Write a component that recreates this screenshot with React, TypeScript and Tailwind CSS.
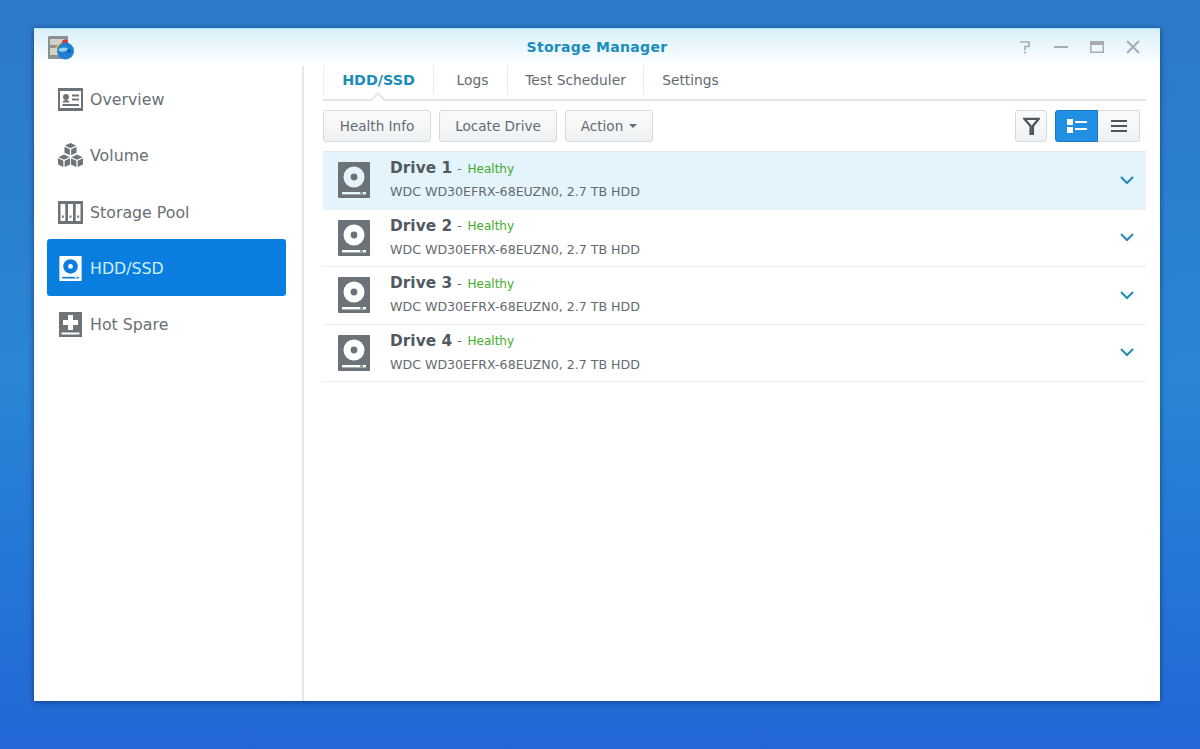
import React from "react";

const F = "font-['DejaVu_Sans',sans-serif]";

function HddIcon({ className, fg = "#6b7378", bg = "#ffffff" }: { className?: string; fg?: string; bg?: string }) {
  return (
    <svg viewBox="0 0 32 36" className={className}>
      <rect x="0" y="0" width="32" height="36" rx="1" fill={fg} />
      <circle cx="16" cy="15" r="10.500" fill={bg} />
      <circle cx="16" cy="15" r="3.400" fill={fg} />
      <rect x="4" y="30" width="24" height="2.400" fill={bg} />
      <rect x="22" y="30.400" width="3" height="1.400" fill={fg} />
    </svg>
  );
}

const items = [
  {
    name: "Overview",
    icon: (
      <svg viewBox="0 0 25 23" className="w-[25px] h-[23px]">
        <path fillRule="evenodd" d="M0 0h25v23H0zM2 3v17h21V3z" fill="#6e7377" />
        <circle cx="8" cy="9" r="3" fill="#6e7377" />
        <path d="M4.500 14.500c0-1.500 1.500-2.500 3.500-2.500s3.500 1 3.500 2.500z" fill="#6e7377" />
        <path d="M14 6.500h7v2h-7zM14 10.500h7v2h-7zM4.500 16h16.500v2H4.500z" fill="#6e7377" />
      </svg>
    ),
  },
  {
    name: "Volume",
    icon: (
      <svg viewBox="0 0 27 27" className="w-[27px] h-[27px]">
        <path d="M13.500 0l6 2.800-6 2.800-6-2.800zM7 4l5.800 2.700v6.500L7 10.500zM20 4l-5.800 2.700v6.500L20 10.500z" fill="#6e7377" />
        <path d="M6.500 12.500l6 2.800-6 2.800-6-2.800zM0 16.500l5.800 2.700V26L0 23.200zM13 16.500l-5.800 2.700V26l5.800-2.800z" fill="#6e7377" />
        <path d="M20.500 12.500l6 2.800-6 2.800-6-2.800zM14 16.500l5.800 2.700V26L14 23.200zM27 16.500l-5.800 2.700V26l5.800-2.800z" fill="#6e7377" />
      </svg>
    ),
  },
  {
    name: "Storage Pool",
    icon: (
      <svg viewBox="0 0 25 23" className="w-[25px] h-[23px]">
        <path fillRule="evenodd" d="M0 0h25v23H0zM2.500 3v17h4.800V3zM10 3v17h5V3zM17.700 3v17h4.800V3z" fill="#6e7377" />
        <path d="M4 14.500h1.800v2.200H4zM11.600 14.500h1.800v2.200h-1.800zM19.300 14.500h1.800v2.200h-1.800z" fill="#6e7377" />
      </svg>
    ),
  },
  {
    name: "HDD/SSD",
    active: true,
    icon: <HddIcon className="w-[23px] h-[25px]" fg="#ffffff" bg="#0a7edf" />,
  },
  {
    name: "Hot Spare",
    icon: (
      <svg viewBox="0 0 23 25" className="w-[23px] h-[25px]">
        <rect width="23" height="25" fill="#6e7377" />
        <path d="M9 3h5v5h5v5h-5v5H9v-5H4V8h5z" fill="#ffffff" />
        <rect x="2.500" y="20.500" width="18" height="2" fill="#ffffff" />
      </svg>
    ),
  },
];

const tabs = [
  { label: "Logs", w: "w-[74px]", pad: "pl-[4px]" },
  { label: "Test Scheduler", w: "w-[136px]", pad: "" },
  { label: "Settings", w: "w-[94px]", pad: "" },
];

function Chevron() {
  return (
    <svg viewBox="0 0 14 9" className="w-[14px] h-[9px]" fill="none" stroke="#2389ba" strokeWidth="2">
      <path d="M1 1l6 6 6-6" />
    </svg>
  );
}

export default function App() {
  return (
    <div className={`${F} w-[1200px] h-[749px] overflow-hidden pt-[28px] pl-[34px] bg-gradient-to-b from-[#2e79c9] via-[#2a86d6] to-[#2367d6]`}>
      <div className="w-[1126px] h-[673px] bg-white flex flex-col shadow-[0_1px_6px_rgba(10,40,100,0.7)]">
        {/* Title bar */}
        <div className="relative h-[38px] shrink-0 flex items-center justify-center border-t border-[#a8e6f8] bg-gradient-to-b from-[#d8f0f9] to-white">
          <svg viewBox="0 0 26 24" className="absolute left-[14px] top-[7px] w-[26px] h-[24px]">
            <rect x="0" y="0" width="20" height="23" rx="1" fill="#8b9094" />
            <rect x="2" y="3" width="15" height="6" fill="#cfd2cf" />
            <rect x="2" y="12" width="15" height="7" fill="#d6d3c4" />
            <path d="M7 11l7-5 4 3-5 6z" fill="#f0b52a" />
            <circle cx="17" cy="6.500" r="3" fill="#d03a36" />
            <circle cx="17.500" cy="15" r="8.500" fill="#1f7fd0" />
            <path d="M10 14c3-3 8-3 10-1-2 3-7 4-10 1z" fill="#9ccff0" />
            <circle cx="21" cy="15" r="2" fill="#1562ac" />
          </svg>
          <span className="text-[14px] font-bold text-[#1a8dbb] tracking-[0.3px]">Storage Manager</span>
          <div className="absolute right-[18px] top-[9px] flex items-center gap-[18px]">
            <svg viewBox="0 0 18 18" className="w-[18px] h-[18px]" fill="none" stroke="#a6adb1" strokeWidth="1.700">
              <path d="M4 4h9v4.500H9V12" />
              <path d="M9 13.500V15.500" />
            </svg>
            <svg viewBox="0 0 18 18" className="w-[18px] h-[18px]" fill="none" stroke="#a6adb1" strokeWidth="2">
              <path d="M2 9h14" />
            </svg>
            <svg viewBox="0 0 18 18" className="w-[18px] h-[18px]" fill="#a6adb1">
              <path fillRule="evenodd" d="M2 3h14v12H2zM3.500 7v6.500h11V7z" />
            </svg>
            <svg viewBox="0 0 18 18" className="w-[18px] h-[18px]" fill="none" stroke="#a6adb1" strokeWidth="2">
              <path d="M3 3l12 12M15 3L3 15" />
            </svg>
          </div>
        </div>

        <div className="flex-1 flex min-h-0">
          {/* Sidebar */}
          <div className="w-[270px] shrink-0 border-r-2 border-[#e4e7e9] pl-[13px] pr-[16px] pt-[4.500px]">
            {items.map((it) => (
              <div
                key={it.name}
                className={`h-[56.250px] flex items-center pl-[11px] pt-[2px] rounded-[3px] ${it.active ? "bg-[#0a7edf] text-[#cdeeff]" : "text-[#696f74]"}`}
              >
                <div className="w-[25px] flex justify-center">{it.icon}</div>
                <span className="ml-[7px] pt-[1px] text-[15.800px] leading-none">{it.name}</span>
              </div>
            ))}
          </div>

          {/* Main */}
          <div className="flex-1 min-w-0 pl-[19px] pr-[14px]">
            <div className="relative h-[35px] flex border-b-2 border-[#e4e7e9]">
              <div className="w-[110px] h-[30px] flex items-center justify-center border-l border-[#f0f1f2] text-[14.300px] font-bold text-[#1a8dbb]">HDD/SSD</div>
              {tabs.map((t) => (
                <div key={t.label} className={`${t.w} ${t.pad} h-[28px] flex items-center justify-center border-l border-[#e9ecee] text-[13.800px] text-[#646b70] last:border-r`}>
                  {t.label}
                </div>
              ))}
              <div className="absolute left-[50px] top-[28px] w-[10px] h-[10px] rotate-45 bg-white border-l-2 border-t-2 border-[#e4e7e9]" />
            </div>

            <div className="h-[50px] flex items-center justify-between pr-[6px]">
              <div className="flex gap-[8px]">
                {["Health Info", "Locate Drive"].map((b, i) => (
                  <div key={b} className={`${i === 0 ? "w-[108px]" : "w-[118px]"} h-[32px] flex items-center justify-center rounded-[3px] border border-[#d5dadd] bg-gradient-to-b from-[#fafbfc] to-[#eef1f3] text-[13.600px] text-[#646b70]`}>
                    {b}
                  </div>
                ))}
                <div className="w-[88px] h-[32px] flex items-center justify-center gap-[6px] rounded-[3px] border border-[#d5dadd] bg-gradient-to-b from-[#fafbfc] to-[#eef1f3] text-[13.600px] text-[#646b70]">
                  Action
                  <span className="w-0 h-0 border-x-[4px] border-x-transparent border-t-[4px] border-t-[#646b70]" />
                </div>
              </div>
              <div className="flex gap-[8px]">
                <div className="w-[32px] h-[32px] flex items-center justify-center rounded-[3px] border border-[#d5dadd] bg-gradient-to-b from-[#fafbfc] to-[#eef1f3]">
                  <svg viewBox="0 0 18 19" className="w-[17px] h-[18px]" fill="none" stroke="#4f565b" strokeWidth="2.400">
                    <path d="M1.500 2h15L10.500 9.500V18H8V9.500z" />
                  </svg>
                </div>
                <div className="flex h-[32px]">
                  <div className="w-[43px] flex items-center justify-center rounded-l-[3px] bg-[#2190e3] border border-[#1b78c0]">
                    <svg viewBox="0 0 20 14" className="w-[20px] h-[14px]" fill="#ffffff">
                      <path d="M0 0h6v6H0zM0 8h6v6H0zM8 2h12v2H8zM8 9h12v2H8z" />
                    </svg>
                  </div>
                  <div className="w-[42px] flex items-center justify-center rounded-r-[3px] border border-l-0 border-[#d5dadd] bg-gradient-to-b from-[#fafbfc] to-[#eef1f3]">
                    <svg viewBox="0 0 16 12" className="w-[16px] h-[12px]" fill="#4f565b">
                      <path d="M0 0h16v2H0zM0 5h16v2H0zM0 10h16v2H0z" />
                    </svg>
                  </div>
                </div>
              </div>
            </div>

            <div className="border-t border-[#e4e7e9]">
              {[1, 2, 3, 4].map((n) => (
                <div key={n} className={`h-[57.500px] flex items-center pl-[15px] pr-[12px] border-b border-[#eceff1] ${n === 1 ? "bg-[#e4f4fc]" : ""}`}>
                  <HddIcon className="w-[32px] h-[36px] shrink-0" fg="#6b7378" bg={n === 1 ? "#e4f4fc" : "#ffffff"} />
                  <div className="ml-[20px] flex-1 -mt-[1px]">
                    <div className="h-[23px] flex items-center">
                      <span className="text-[15.400px] font-bold text-[#505a60]">Drive {n}</span>
                      <span className="ml-[5px] text-[12px] text-[#5f676c]">-</span>
                      <span className="ml-[6px] text-[12px] text-[#45ab2a]">Healthy</span>
                    </div>
                    <div className="mt-[2px] text-[12.600px] leading-[20px] text-[#646b70]">WDC WD30EFRX-68EUZN0, 2.7 TB HDD</div>
                  </div>
                  <Chevron />
                </div>
              ))}
            </div>
          </div>
        </div>
      </div>
    </div>
  );
}
